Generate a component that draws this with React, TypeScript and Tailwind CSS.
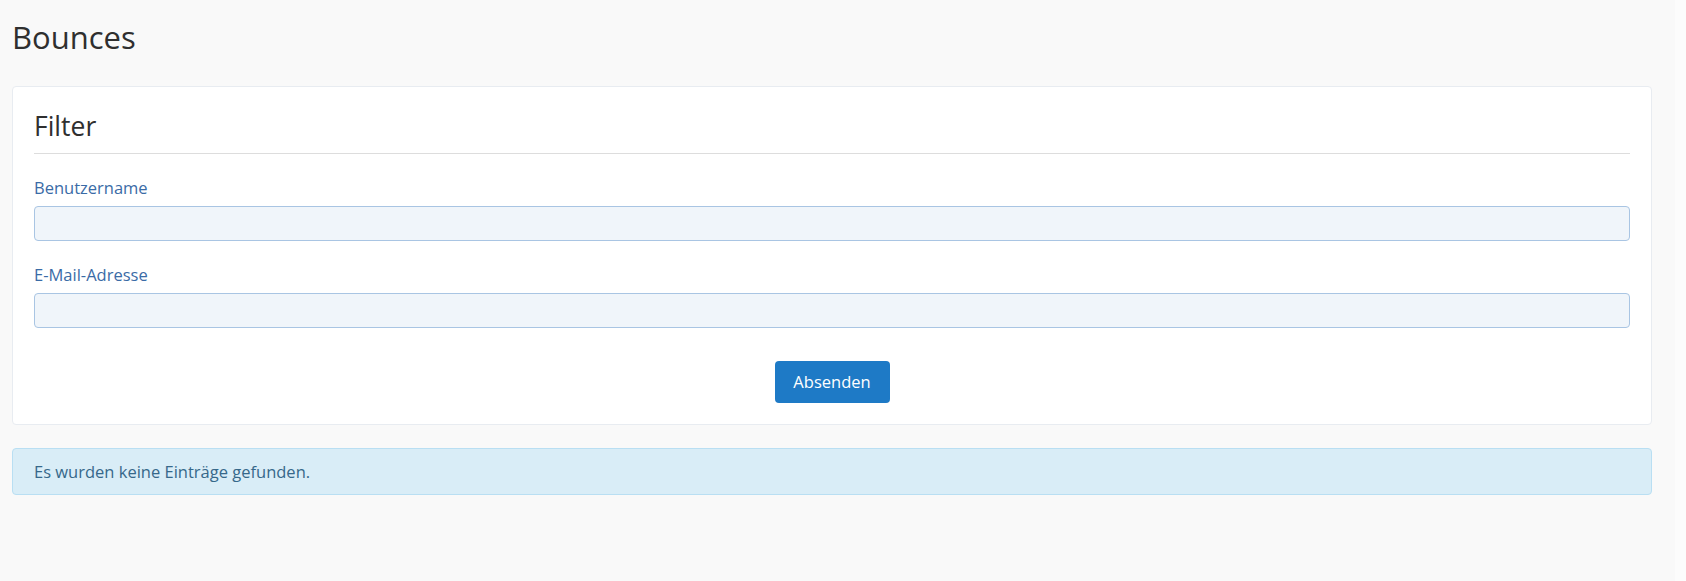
export default function App() {
  return (
    <div className="flex min-h-[581px] bg-[#fcfcfc] font-['Open_Sans',sans-serif]">
      <main className="w-[1675px] shrink-0 bg-[#f9f9f9] pl-[12px] pr-[23px] pt-[21px] pb-[86px]">
        <h1 className="text-[31px] leading-[33px] font-normal text-[#2f2f2f]">Bounces</h1>

        <section className="mt-[32px] rounded-[4px] border border-[#e8ecf1] bg-white px-[21px] pt-[25px] pb-[21px]">
          <h2 className="text-[26.5px] leading-[28px] font-normal text-[#2f2f2f]">Filter</h2>
          <div className="mt-[13px] h-px bg-[#dddddd]" />

          <form className="mt-[24px]" onSubmit={(e) => e.preventDefault()}>
            <Field label="Benutzername" />
            <div className="mt-[24px]">
              <Field label="E-Mail-Adresse" />
            </div>

            <div className="mt-[33px] flex justify-center">
              <button
                type="submit"
                className="h-[42px] w-[115px] rounded-[4px] bg-[#1e7ac6] text-[16.5px] text-white"
              >
                Absenden
              </button>
            </div>
          </form>
        </section>

        <div className="mt-[23px] rounded-[4px] border border-[#b9dff3] bg-[#d9edf7] px-[21px] pt-[13px] pb-[12px] text-[16.5px] leading-[20px] text-[#36688a]">
          Es wurden keine Einträge gefunden.
        </div>
      </main>
    </div>
  );
}

function Field({ label }: { label: string }) {
  return (
    <label className="block">
      <span className="block text-[16.5px] leading-[20px] text-[#3a6ba6]">{label}</span>
      <input
        type="text"
        className="mt-[8px] block h-[35px] w-full rounded-[4px] border border-[#a9c5e3] bg-[#f0f5fa] px-3 text-[16px] outline-none"
      />
    </label>
  );
}
